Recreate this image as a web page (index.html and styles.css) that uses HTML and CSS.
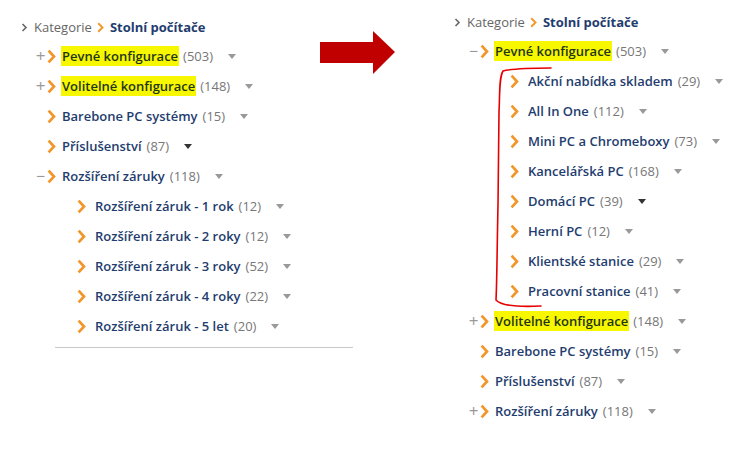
FILE: index.html
```html
<!DOCTYPE html>
<html>
<head>
    <title>Kategorie - Stolní počítače</title>
    <link rel="stylesheet" href="styles.css">
</head>
<body>
    <div class="page">
        <div class="tree tree-before">
            <div class="crumbs">
                <span class="crumb-sep gray"></span>
                <span class="crumb">Kategorie</span>
                <span class="crumb-sep"></span>
                <span class="crumb-current">Stolní počítače</span>
            </div>
            <ul class="level1">
                <li class="row"><span class="toggle">+</span><span class="chev"></span><span class="name mark">Pevné konfigurace</span><span class="count">(503)</span><span class="caret"></span></li>
                <li class="row"><span class="toggle">+</span><span class="chev"></span><span class="name mark">Volitelné konfigurace</span><span class="count">(148)</span><span class="caret"></span></li>
                <li class="row"><span class="toggle"></span><span class="chev"></span><span class="name">Barebone PC systémy</span><span class="count">(15)</span><span class="caret"></span></li>
                <li class="row"><span class="toggle"></span><span class="chev"></span><span class="name">Příslušenství</span><span class="count">(87)</span><span class="caret dark"></span></li>
                <li class="row"><span class="toggle minus">&minus;</span><span class="chev"></span><span class="name">Rozšíření záruky</span><span class="count">(118)</span><span class="caret"></span></li>
                <li>
                    <ul class="level2">
                        <li class="row"><span class="chev"></span><span class="name">Rozšíření záruk - 1 rok</span><span class="count">(12)</span><span class="caret"></span></li>
                        <li class="row"><span class="chev"></span><span class="name">Rozšíření záruk - 2 roky</span><span class="count">(12)</span><span class="caret"></span></li>
                        <li class="row"><span class="chev"></span><span class="name">Rozšíření záruk - 3 roky</span><span class="count">(52)</span><span class="caret"></span></li>
                        <li class="row"><span class="chev"></span><span class="name">Rozšíření záruk - 4 roky</span><span class="count">(22)</span><span class="caret"></span></li>
                        <li class="row"><span class="chev"></span><span class="name">Rozšíření záruk - 5 let</span><span class="count">(20)</span><span class="caret"></span></li>
                    </ul>
                </li>
            </ul>
            <div class="divider"></div>
        </div>

        <div class="tree tree-after">
            <div class="crumbs">
                <span class="crumb-sep gray"></span>
                <span class="crumb">Kategorie</span>
                <span class="crumb-sep"></span>
                <span class="crumb-current">Stolní počítače</span>
            </div>
            <ul class="level1">
                <li class="row"><span class="toggle minus">&minus;</span><span class="chev"></span><span class="name mark">Pevné konfigurace</span><span class="count">(503)</span><span class="caret"></span></li>
                <li>
                    <ul class="level2">
                        <li class="row"><span class="chev"></span><span class="name">Akční nabídka skladem</span><span class="count">(29)</span><span class="caret"></span></li>
                        <li class="row"><span class="chev"></span><span class="name">All In One</span><span class="count">(112)</span><span class="caret"></span></li>
                        <li class="row"><span class="chev"></span><span class="name">Mini PC a Chromeboxy</span><span class="count">(73)</span><span class="caret"></span></li>
                        <li class="row"><span class="chev"></span><span class="name">Kancelářská PC</span><span class="count">(168)</span><span class="caret"></span></li>
                        <li class="row"><span class="chev"></span><span class="name">Domácí PC</span><span class="count">(39)</span><span class="caret dark"></span></li>
                        <li class="row"><span class="chev"></span><span class="name">Herní PC</span><span class="count">(12)</span><span class="caret"></span></li>
                        <li class="row"><span class="chev"></span><span class="name">Klientské stanice</span><span class="count">(29)</span><span class="caret"></span></li>
                        <li class="row"><span class="chev"></span><span class="name">Pracovní stanice</span><span class="count">(41)</span><span class="caret"></span></li>
                    </ul>
                </li>
                <li class="row"><span class="toggle">+</span><span class="chev"></span><span class="name mark">Volitelné konfigurace</span><span class="count">(148)</span><span class="caret"></span></li>
                <li class="row"><span class="toggle"></span><span class="chev"></span><span class="name">Barebone PC systémy</span><span class="count">(15)</span><span class="caret"></span></li>
                <li class="row"><span class="toggle"></span><span class="chev"></span><span class="name">Příslušenství</span><span class="count">(87)</span><span class="caret"></span></li>
                <li class="row"><span class="toggle">+</span><span class="chev"></span><span class="name">Rozšíření záruky</span><span class="count">(118)</span><span class="caret"></span></li>
            </ul>
        </div>

        <!-- annotations drawn over the screenshots -->
        <svg class="notes" width="733" height="453" viewBox="0 0 733 453">
            <polygon points="320,42 373,42 373,31 395,52 373,74 373,63 320,63" fill="#c00000"/>
            <path d="M551 68 C535 68 515 68 503 71 C499 78 500 92 499 112 L498 205 C497 250 497 280 496 300 C501 306 520 307 541 306" fill="none" stroke="#e60000" stroke-width="1.6" stroke-linecap="round"/>
        </svg>
    </div>
</body>
</html>
```

FILE: styles.css
```css
* {
    box-sizing: border-box;
}
body {
    margin: 0;
    background: #fff;
    font-family: "Open Sans", "Noto Sans", sans-serif;
    font-size: 13px;
}
.page {
    position: relative;
    display: flex;
    width: 733px;
    height: 453px;
}
.tree {
    display: flex;
    flex-direction: column;
}
.tree-before {
    width: 359px;
    padding: 17px 0 0 21px;
}
.tree-after {
    margin-left: 95px;
    padding: 12px 0 0 0;
}
.crumbs {
    display: flex;
    align-items: center;
    height: 20px;
    color: #666;
}
.crumb-sep {
    width: 7px;
    height: 11px;
    margin: 0 6px 0 5px;
    background: no-repeat center / 7px 11px url("data:image/svg+xml,%3Csvg xmlns='http://www.w3.org/2000/svg' viewBox='0 0 7 11'%3E%3Cpolyline points='1.2,1.2 5.5,5.5 1.2,9.8' fill='none' stroke='%23f39a2d' stroke-width='2'/%3E%3C/svg%3E");
}
.crumb-sep.gray {
    margin-left: 0;
    background-image: url("data:image/svg+xml,%3Csvg xmlns='http://www.w3.org/2000/svg' viewBox='0 0 7 11'%3E%3Cpolyline points='1.5,2 5,5.5 1.5,9' fill='none' stroke='%23666' stroke-width='1.6'/%3E%3C/svg%3E");
}
.crumb-current {
    color: #1f3d6e;
    font-weight: 700;
}
ul {
    list-style: none;
    margin: 0;
    padding: 0;
}
.level1 {
    margin-top: 4px;
}
.row {
    display: flex;
    align-items: center;
    height: 30px;
    white-space: nowrap;
}
.toggle {
    width: 13px;
    margin-left: 13px;
    color: #999;
    font-size: 17px;
    line-height: 20px;
    text-align: center;
}
.toggle.minus {
    font-size: 16px;
}
.chev {
    width: 9px;
    height: 15px;
    margin: 0 5px 0 0;
    background: no-repeat center / 9px 15px url("data:image/svg+xml,%3Csvg xmlns='http://www.w3.org/2000/svg' viewBox='0 0 9 15'%3E%3Cpolyline points='1.6,1.6 7,7.5 1.6,13.4' fill='none' stroke='%23f3962a' stroke-width='2.7'/%3E%3C/svg%3E");
}
.level2 {
    padding-left: 56px;
}
.level2 .chev {
    margin: 0 8px 0 0;
}
.name {
    color: #1f3d6e;
    font-weight: 600;
    padding: 1px 1px;
}
.name.mark {
    background: #f7f700;
    color: #1f3517;
}
.count {
    color: #777;
    margin-left: 4px;
}
.caret {
    width: 0;
    height: 0;
    margin-left: 15px;
    border-left: 4px solid transparent;
    border-right: 4px solid transparent;
    border-top: 5px solid #999;
}
.caret.dark {
    border-top-color: #333;
}
.divider {
    margin: 6px 0 0 34px;
    width: 298px;
    border-top: 1px solid #c8c8c8;
}
.notes {
    position: absolute;
    left: 0;
    top: 0;
    pointer-events: none;
}
```
